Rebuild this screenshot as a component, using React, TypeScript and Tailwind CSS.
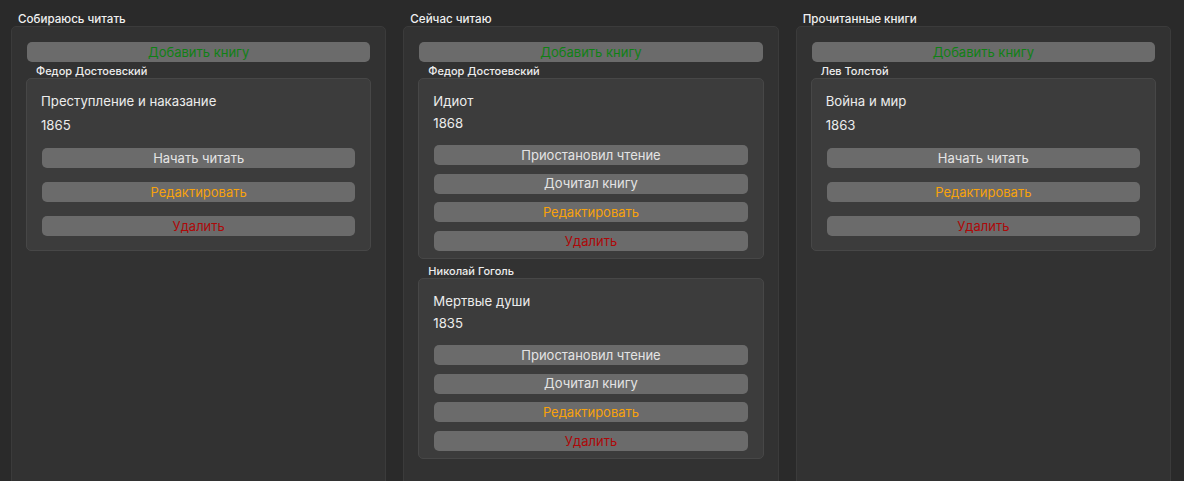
type Book = { author: string; title: string; year: string };

const columns: { name: string; mode: "plan" | "reading"; books: Book[] }[] = [
  {
    name: "Собираюсь читать",
    mode: "plan",
    books: [{ author: "Федор Достоевский", title: "Преступление и наказание", year: "1865" }],
  },
  {
    name: "Сейчас читаю",
    mode: "reading",
    books: [
      { author: "Федор Достоевский", title: "Идиот", year: "1868" },
      { author: "Николай Гоголь", title: "Мертвые души", year: "1835" },
    ],
  },
  {
    name: "Прочитанные книги",
    mode: "plan",
    books: [{ author: "Лев Толстой", title: "Война и мир", year: "1863" }],
  },
];

const Btn = ({ label, color }: { label: string; color: string }) => (
  <div
    className={`h-[20px] rounded-[5px] bg-[#6b6b6b] flex items-center justify-center text-[13px] leading-none ${color}`}
  >
    {label}
  </div>
);

const BookCard = ({ book, mode, first }: { book: Book; mode: "plan" | "reading"; first: boolean }) => {
  const reading = mode === "reading";
  return (
    <div className={`flex flex-col ${first ? "" : "mt-[3px]"}`}>
      <div className="h-[14px] mt-[2px] pl-[10px] text-[11px] leading-[14px] font-medium text-[#ededed]">
        {book.author}
      </div>
      <div
        className={`rounded-[5px] border border-[#474747] bg-[#3c3c3c] px-[14px] pt-[14px] ${
          reading ? "pb-[7px]" : "pb-[14px]"
        }`}
      >
        <div className="h-[17px] text-[13.2px] leading-[17px] text-[#ececec]">{book.title}</div>
        <div
          className={`h-[17px] text-[13.2px] leading-[17px] text-[#ececec] ${reading ? "mt-[5px]" : "mt-[7px]"}`}
        >
          {book.year}
        </div>
        {reading ? (
          <div className="mt-[13px] flex flex-col gap-[8.7px] mx-[1px]">
            <Btn label="Приостановил чтение" color="text-[#e4e4e4]" />
            <Btn label="Дочитал книгу" color="text-[#e4e4e4]" />
            <Btn label="Редактировать" color="text-[#f7a20c]" />
            <Btn label="Удалить" color="text-[#ad0909]" />
          </div>
        ) : (
          <div className="mt-[14px] flex flex-col gap-[14px] mx-[1px]">
            <Btn label="Начать читать" color="text-[#e4e4e4]" />
            <Btn label="Редактировать" color="text-[#f7a20c]" />
            <Btn label="Удалить" color="text-[#ad0909]" />
          </div>
        )}
      </div>
    </div>
  );
};

export default function App() {
  return (
    <div className="h-[481px] overflow-hidden bg-[#2a2a2a] font-['Inter',sans-serif] antialiased">
      <div className="h-[510px] grid grid-cols-3 gap-[17px] pl-[11px] pr-[13px] pt-[12px]">
        {columns.map((col) => (
          <div key={col.name} className="flex flex-col">
            <div className="h-[14px] pl-[7px] text-[11.6px] leading-[14px] font-medium text-[#f0f0f0]">
              {col.name}
            </div>
            <div className="flex-1 rounded-[5px] border border-[#3b3b3b] bg-[#323232] pt-[15px] px-[14px]">
              <div className="mx-[1px]">
                <Btn label="Добавить книгу" color="text-[#108015]" />
              </div>
              {col.books.map((b, i) => (
                <BookCard key={b.title} book={b} mode={col.mode} first={i === 0} />
              ))}
            </div>
          </div>
        ))}
      </div>
    </div>
  );
}
